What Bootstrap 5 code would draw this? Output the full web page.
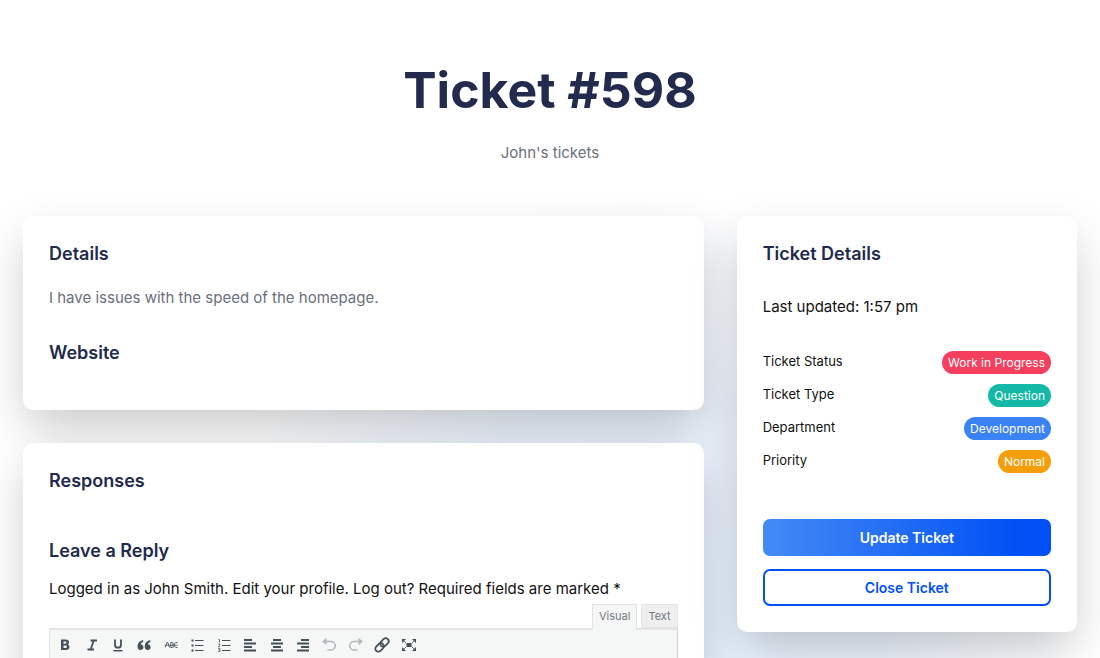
<!DOCTYPE html>
<html lang="en">
<head>
<meta charset="utf-8">
<meta name="viewport" content="width=device-width, initial-scale=1">
<title>Ticket #598</title>
<link href="https://cdn.jsdelivr.net/npm/bootstrap@5.3.0/dist/css/bootstrap.min.css" rel="stylesheet">
<style>
  :root { --navy: #222a4d; --royal: #0050f5; --line: #e2e4e5; --tool: #f5f7f7; --ink: #434f59; }
  body {
    font-family: Inter, "Liberation Sans", sans-serif;
    font-size: 15px; line-height: 24px; color: #111;
    background: radial-gradient(circle 440px at 640px 640px, #e6f3ff 0%, #edf4fe 55%, #fff 100%) no-repeat #fff;
  }
  ::-webkit-scrollbar { display: none; }
  h1 { font-size: 50px; line-height: 60px; font-weight: 700; color: var(--navy); }
  h2 { font-size: 18px; line-height: 24px; font-weight: 600; color: var(--navy); }
  .soft { color: #6b6f7b; }
  .page { padding: 60px 23px 48px; }
  .lead-in { margin-top: 21px; }
  .board { grid-template-columns: 2fr 1fr; gap: 33px; margin-top: 51px; }
  .stack { gap: 33px; }
  .panel { background: #fff; border-radius: 10px; padding: 26px; box-shadow: 0 20px 48px -4px rgba(0,0,0,.22); }
  .site { margin-top: 31px; margin-bottom: 19px; }
  .updated { margin: 29px 0 32px; }
  .facts { font-size: 13px; line-height: 23px; gap: 10px; }
  .facts dt { font-weight: 400; line-height: 21px; }
  .pill { font-size: 12px; line-height: 23px; padding: 0 6px; font-weight: 400; color: #fff; }
  .rose { background: #f43f5e; } .teal { background: #14b8a6; }
  .azure { background: #3b82f6; } .amber { background: #f59e0b; }
  .acts { gap: 13px; margin-top: 46px; }
  .act { height: 37px; font-size: 14px; line-height: 20px; font-weight: 600; border-radius: 7px; padding: 0; }
  .act-main, .act-main:hover { color: #fff; border: 0; background: linear-gradient(90deg, #448bf5, var(--royal) 90%); }
  .act-line { color: var(--royal); border: 2px solid var(--royal); }
  .reply { margin-top: 46px; margin-bottom: 14px; }
  .tabs { gap: 4px; margin-bottom: -2px; padding-top: 3px; }
  .tabs button { height: 24px; padding: 0 6px; font-size: 11px; line-height: 20px; color: #72777c; background: #efefef; border: 1px solid var(--line); }
  .tabs button.on { height: 26px; padding-bottom: 3px; background: var(--tool); border-bottom: 0; position: relative; }
  .editor { border: 1px solid var(--line); border-top-width: 2px; border-right-color: #cfd2d3; }
  .tools { background: var(--tool); padding: 2px; }
  .tool-row { width: 370px; max-width: 100%; grid-template-columns: repeat(14, 1fr); }
  .tools button { height: 26px; padding: 0; border: 0; background: none; color: var(--ink); }
  .tools button:disabled { color: #b3b8bc; }
  .tools svg { display: block; margin: auto; width: 20px; height: 20px; }
  .editor textarea { height: 160px; border: 0; }
</style>
</head>
<body>
<main class="page">
  <header class="text-center">
    <h1 class="mb-0">Ticket #598</h1>
    <p class="lead-in soft mb-0">John's tickets</p>
  </header>
  <div class="board d-grid align-items-start">
    <div class="stack d-flex flex-column">
      <section class="panel">
        <h2 class="mb-3">Details</h2>
        <p class="soft mb-0 pt-1">I have issues with the speed of the homepage.</p>
        <h2 class="site">Website</h2>
      </section>
      <section class="panel">
        <h2 class="mb-0">Responses</h2>
        <h2 class="reply">Leave a Reply</h2>
        <p class="mb-0">Logged in as John Smith. Edit your profile. Log out? Required fields are marked *</p>
        <div class="tabs d-flex justify-content-end">
          <button type="button" class="on">Visual</button>
          <button type="button">Text</button>
        </div>
        <div class="editor">
          <div class="tools"><div class="tool-row d-grid" role="toolbar" aria-label="Formatting">
            <button type="button" aria-label="Bold"><svg viewBox="0 0 20 20" fill="currentColor"><path fill-rule="evenodd" d="M6 4.500h4.700c2 0 3.300 1 3.300 2.700 0 1.100-.6 1.900-1.500 2.300 1.300.3 2 1.300 2 2.500 0 2-1.500 3-3.700 3H6zm2.500 2v2.200h1.700c.8 0 1.300-.4 1.300-1.100s-.5-1.100-1.300-1.100zm0 4v2.600h2c.9 0 1.400-.5 1.400-1.300s-.5-1.300-1.400-1.300z"/></svg></button>
            <button type="button" aria-label="Italic"><svg viewBox="0 0 20 20" fill="none" stroke="currentColor" stroke-width="1.800"><path d="M8.500 5.500H15M5.500 14.500H12M11.700 5.500 8.700 14.500"/></svg></button>
            <button type="button" aria-label="Underline"><svg viewBox="0 0 20 20" fill="none" stroke="currentColor" stroke-width="1.800"><path d="M7 4.500v5.200a3 3 0 0 0 6 0V4.500"/><path stroke-width="1.500" d="M5.500 15.700h9"/></svg></button>
            <button type="button" aria-label="Quote"><svg viewBox="0 0 20 20" fill="currentColor"><path d="M9 5C5.500 5.800 3.500 8.200 3.500 11.500c0 2.200 1.200 3.500 3 3.500 1.700 0 2.900-1.200 2.900-2.800S8.300 9.500 6.800 9.500c.2-1.400 1-2.300 2.500-2.800zM16.200 5c-3.500.8-5.500 3.200-5.500 6.500 0 2.200 1.200 3.500 3 3.500 1.700 0 2.900-1.200 2.900-2.800s-1.100-2.700-2.600-2.700c.2-1.400 1-2.300 2.500-2.800z"/></svg></button>
            <button type="button" aria-label="Strikethrough"><svg viewBox="0 0 20 20" fill="none" stroke="currentColor" stroke-width=".9"><path d="M4.200 12.500 6 7.500h.8l1.700 5M9.800 7.500v5h1.400c2 0 2-2.500 0-2.500 1.700 0 1.700-2.500 0-2.500zM16.500 7.500h-1.800c-1.600.8-1.600 4.200 0 5h1.800"/><path stroke-width=".7" d="M3.500 10.300h13.500"/></svg></button>
            <button type="button" aria-label="Bulleted list"><svg viewBox="0 0 20 20" fill="none" stroke="currentColor"><path d="M8 5.500h8.500M8 10.500h8.500M8 15.500h8.500"/><path stroke-width="2" d="M4.500 5.500h2M4.500 10.500h2M4.500 15.500h2"/></svg></button>
            <button type="button" aria-label="Numbered list"><svg viewBox="0 0 20 20" fill="none" stroke="currentColor"><path d="M8 5.500h8.500M8 10.500h8.500M8 15.500h8.500"/><path stroke-width=".8" d="M4.500 4.500h1v3M4.200 9h1.600v1.300l-1.400 1.500h1.700M4.200 13.500h1.700v3H4.200M4.600 15h1.300"/></svg></button>
            <button type="button" aria-label="Align left"><svg viewBox="0 0 20 20" stroke="currentColor" stroke-width="1.800"><path d="M4 5h8M4 8.500h12M4 12h8M4 15.500h12"/></svg></button>
            <button type="button" aria-label="Align center"><svg viewBox="0 0 20 20" stroke="currentColor" stroke-width="1.800"><path d="M6 5h8M4 8.500h12M6 12h8M4 15.500h12"/></svg></button>
            <button type="button" aria-label="Align right"><svg viewBox="0 0 20 20" stroke="currentColor" stroke-width="1.800"><path d="M8 5h8M4 8.500h12M8 12h8M4 15.500h12"/></svg></button>
            <button type="button" aria-label="Undo" disabled><svg viewBox="0 0 20 20" fill="none" stroke="currentColor" stroke-width="1.600"><path d="M6 6.500h6a4.200 4.200 0 0 1 0 8.500H8.500"/><path fill="currentColor" stroke="none" d="M3 6.500 7.500 3v7z"/></svg></button>
            <button type="button" aria-label="Redo" disabled><svg viewBox="0 0 20 20" fill="none" stroke="currentColor" stroke-width="1.600"><path d="M14 6.500H8A4.200 4.200 0 0 0 8 15h3.500"/><path fill="currentColor" stroke="none" d="M17 6.500 12.500 3v7z"/></svg></button>
            <button type="button" aria-label="Link"><svg viewBox="0 0 20 20" fill="none" stroke="currentColor" stroke-width="1.700"><g transform="rotate(-45 10 10)"><rect x="1.800" y="7" width="9.500" height="6" rx="3"/><rect x="8.700" y="7" width="9.500" height="6" rx="3"/></g></svg></button>
            <button type="button" aria-label="Fullscreen"><svg viewBox="0 0 20 20" fill="currentColor"><path d="M7.500 8h5v4h-5zM3 4h4L3 8zM17 4v4l-4-4zM3 16v-4l4 4zM17 16h-4l4-4z"/><path stroke="currentColor" stroke-width=".8" d="m4 5 3 3M16 5l-3 3M4 15l3-3M16 15l-3-3"/></svg></button>
          </div></div>
          <textarea class="form-control rounded-0" aria-label="Reply"></textarea>
        </div>
      </section>
    </div>
    <aside class="panel">
      <h2 class="mb-0">Ticket Details</h2>
      <p class="updated">Last updated: 1:57 pm</p>
      <dl class="facts d-flex flex-column mb-0">
        <div class="d-flex justify-content-between"><dt>Ticket Status</dt><dd class="pill rose rounded-pill mb-0">Work in Progress</dd></div>
        <div class="d-flex justify-content-between"><dt>Ticket Type</dt><dd class="pill teal rounded-pill mb-0">Question</dd></div>
        <div class="d-flex justify-content-between"><dt>Department</dt><dd class="pill azure rounded-pill mb-0">Development</dd></div>
        <div class="d-flex justify-content-between"><dt>Priority</dt><dd class="pill amber rounded-pill mb-0">Normal</dd></div>
      </dl>
      <div class="acts d-grid">
        <button type="button" class="btn act act-main">Update Ticket</button>
        <button type="button" class="btn act act-line">Close Ticket</button>
      </div>
    </aside>
  </div>
</main>
<script src="https://cdn.jsdelivr.net/npm/bootstrap@5.3.0/dist/js/bootstrap.bundle.min.js"></script>
</body>
</html>
